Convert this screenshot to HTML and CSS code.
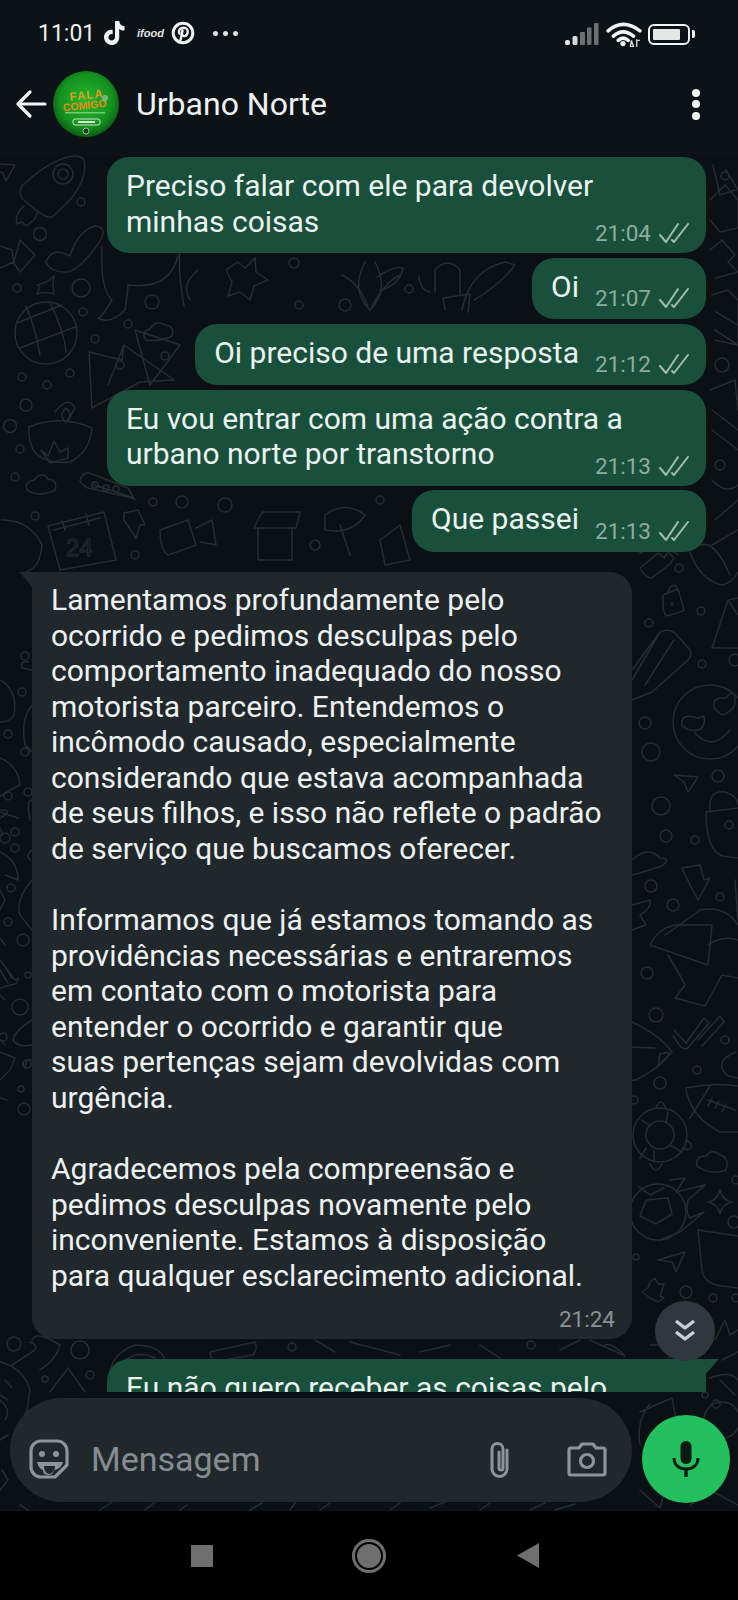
FILE: index.html
```html
<!DOCTYPE html>
<html lang="pt">
<head>
<meta charset="utf-8">
<title>Urbano Norte</title>
<link rel="stylesheet" href="styles.css">
</head>
<body>
<div class="phone">
  <svg class="wallpaper" viewBox="0 0 738 1600" width="738" height="1600" aria-hidden="true">
    <g fill="none" stroke="#272c2f" stroke-width="1.5" stroke-linejoin="round" stroke-linecap="round">
      <!-- upper left -->
      <path d="M0 164 L15 165 L6 181 L3 173 L0 172"/>
      <path d="M22 186 Q42 166 64 158 Q80 153 84 160 Q88 178 70 200 L52 217 Q44 219 22 198 Q18 192 22 186Z"/>
      <circle cx="63" cy="174" r="10"/><circle cx="63" cy="174" r="5"/>
      <path d="M24 206 Q14 214 17 224 L22 222 L26 226 L34 220 L38 212"/>
      <circle cx="81" cy="202" r="4"/><circle cx="40" cy="234" r="6.500"/>
      <path d="M0 246 L12 250 L14 262 L20 240 L35 255 L20 272 L13 262 L0 268"/>
      <path d="M46 262 Q52 246 70 256 Q78 230 96 226 Q112 228 92 252 Q76 272 66 272 Q50 272 46 262Z"/>
      <path d="M102 246 Q100 290 112 300 Q100 320 98 318 Q110 325 125 310 Q128 290 128 285 Q170 290 178 256"/>
      <path d="M37 285 Q47 283 54 276 Q52 285 54 294 Q45 291 37 294 Q41 285 37 285Z"/>
      <circle cx="81" cy="288" r="9"/><circle cx="17" cy="288" r="4"/>
      <circle cx="46" cy="333" r="31"/><path d="M17 323 L62 305 M20 348 L75 327 M26 306 Q36 330 40 355 M50 303 Q64 330 66 352"/>
      <circle cx="83" cy="312" r="4"/><circle cx="128" cy="324" r="4"/><circle cx="95" cy="339" r="4"/><circle cx="152" cy="302" r="7"/>
      <path d="M146 340 Q140 332 150 329 Q156 319 165 325 Q175 326 172 336 Q160 342 146 340Z"/>
      <path d="M89 352 L122 360 L124 345 L174 380 L140 382 L92 408 Z M124 345 L108 385"/>
      <circle cx="22" cy="377" r="4"/><circle cx="47" cy="385" r="4"/><circle cx="70" cy="373" r="4"/><circle cx="165" cy="356" r="4"/>
      <path d="M55 412 Q68 395 75 408 L68 420"/>
      <path d="M182 242 Q176 260 184 306 M198 270 Q180 285 190 300"/>
      <!-- lamp / card / calendar row -->
      <circle cx="10" cy="426" r="6.500"/><circle cx="20" cy="449" r="4"/><circle cx="15" cy="477" r="4"/><circle cx="26" cy="405" r="6"/>
      <path d="M29 427 Q60 414 92 428 Q90 452 70 462 Q45 465 33 450 Q28 438 29 427Z"/>
      <path d="M66 408 Q58 416 66 422 Q74 416 66 408Z M41 450 L48 456 L54 441 L60 452 L68 448 L68 458 L50 463Z"/>
      <path d="M27 490 Q24 482 34 480 Q42 470 48 479 Q58 480 55 490 Q40 498 27 490Z"/>
      <path d="M80 480 Q84 470 92 474 L128 488 L135 500 L132 498 L88 488 Q80 484 80 480Z M94 485 L134 498"/>
      <circle cx="95" cy="485" r="3"/><circle cx="106" cy="488" r="3"/><circle cx="116" cy="489" r="3"/>
      <circle cx="153" cy="502" r="4"/><circle cx="182" cy="502" r="6"/><circle cx="35" cy="516" r="4"/><circle cx="135" cy="555" r="4"/>
      <path d="M48 526 L104 512 L116 560 L60 570 Z M54 530 L100 518"/>
      <path d="M62 520 L65 530 M86 514 L89 525"/>
      <path d="M124 513 L138 510 L145 525 L140 525 L136 538 L124 520 Z"/>
      <path d="M160 530 L188 520 L196 545 L168 555 Q160 550 160 530Z M196 528 L212 520 L216 545 L200 542"/>
      <path d="M2 520 Q30 520 42 545 Q40 568 26 572"/>
      <text x="66" y="556" class="wall-num">24</text>
      <!-- between bubbles -->
      <path d="M226 270 L238 262 L245 268 L255 258 L256 272 L268 280 L254 286 L250 300 L240 292 L228 296 L232 282Z"/>
      <circle cx="294" cy="263" r="5"/><circle cx="299" cy="305" r="4"/><circle cx="345" cy="305" r="6"/>
      <path d="M365 262 Q350 290 370 310 Q390 290 375 262 M342 275 Q358 282 368 306 M400 275 Q385 282 372 306"/>
      <path d="M430 292 Q420 290 419 276 M445 310 L443 298 L470 294 L468 312 M435 292 L435 270 Q448 256 460 270 L460 294"/>
      <path d="M474 300 Q500 285 515 265 L505 262 Q470 270 462 310"/>
      <circle cx="409" cy="289" r="4"/>
      <path d="M377 277 Q395 265 403 268 Q400 285 380 290"/>
      <path d="M135 330 L180 345 L150 385 Z"/><circle cx="120" cy="365" r="4"/>
      <path d="M262 512 L300 512 L296 528 L254 528Z M258 528 L258 560 L292 560 L292 528"/>
      <path d="M325 515 Q345 500 365 515 Q352 535 325 530Z M340 525 L350 555"/>
      <circle cx="315" cy="545" r="5"/><circle cx="380" cy="500" r="4"/><circle cx="225" cy="505" r="7"/>
      <path d="M380 540 L400 525 L410 560 L385 565Z"/>
      <!-- right of outgoing bubbles -->
      <path d="M713 165 L720 195 L735 190 M726 170 L738 190"/>
      <circle cx="725" cy="176" r="4"/>
      <path d="M710 200 L725 185 L738 200 L738 228 L720 232 L710 220"/>
      <path d="M710 250 L722 240 L735 255 L728 262 L738 272 L716 278"/>
      <path d="M712 295 L728 290 L738 300 L738 345 L715 340"/>
      <path d="M716 312 L738 325 M715 330 L738 345"/>
      <circle cx="722" cy="365" r="7"/>
      <path d="M710 390 L735 380 L738 410 M712 410 L738 430 M712 430 L738 450"/>
      <circle cx="720" cy="465" r="5"/>
      <path d="M712 480 Q725 495 738 485 M715 520 L738 500 M712 545 L738 530"/>
      <!-- right strip -->
      <path d="M640 553 Q660 540 678 555 M690 552 Q700 580 722 585 Q732 583 738 572 M700 545 Q715 540 730 575"/>
      <path d="M640 568 L658 553 L664 558 L668 552 L674 558 L670 564 L652 578 Q645 578 640 568Z"/>
      <circle cx="679" cy="568" r="4"/>
      <path d="M663 595 L678 589 L684 610 Q682 612 666 616 L663 610 Z M668 592 Q670 584 676 586 L678 590"/>
      <circle cx="672" cy="604" r="1"/>
      <circle cx="701" cy="611" r="4"/><circle cx="649" cy="623" r="4"/><circle cx="702" cy="664" r="4"/>
      <path d="M632 670 L660 632 Q668 628 675 633 L690 650 Q692 656 688 660 L652 692 L632 700 M632 680 L660 632 M645 685 L674 640"/>
      <path d="M712 648 L728 600 L738 598 M712 648 L738 648 M728 600 L738 615"/>
      <circle cx="735" cy="660" r="6"/>
      <circle cx="710" cy="722" r="37"/>
      <path d="M695 733 Q712 752 730 730"/>
      <path d="M698 718 Q680 712 682 726 Q690 732 698 730 Q706 728 704 716Z"/>
      <path d="M714 708 Q712 696 726 698 Q736 686 735 704 Q732 712 722 715 Z"/>
      <circle cx="645" cy="723" r="6"/><circle cx="651" cy="752" r="9"/>
      <path d="M674 775 L698 777 L688 792 L684 782Z"/>
      <circle cx="718" cy="776" r="6"/><circle cx="661" cy="806" r="9"/><circle cx="666" cy="836" r="6"/><circle cx="695" cy="840" r="4"/>
      <path d="M710 810 Q708 790 725 792 Q738 796 738 805 M706 812 L738 808 M706 812 Q706 850 722 856 L738 858"/>
      <circle cx="729" cy="825" r="4"/>
      <path d="M632 860 Q648 845 660 858 Q672 858 662 866 Q650 870 632 875"/>
      <path d="M682 868 L700 865 L704 880 L710 878 L698 900 L690 885 Z"/>
      <circle cx="651" cy="886" r="6"/><circle cx="673" cy="905" r="6"/><circle cx="720" cy="897" r="4"/>
      <path d="M632 905 L650 900 Q652 908 640 915 L646 925 L632 930"/>
      <path d="M735 880 L738 920"/>
      <path d="M665 935 Q680 925 700 910 Q725 905 738 925"/>
      <!-- hat row -->
      <path d="M650 945 Q660 925 680 925 L712 925 L708 965 Z M708 945 Q722 935 738 940 M668 955 Q680 975 685 985 L675 998 L705 1006 L722 975 L738 978"/>
      <circle cx="647" cy="973" r="6"/><circle cx="656" cy="1015" r="7"/>
      <path d="M674 1030 L686 1043 L704 1018 L709 1023 L688 1048 Q684 1050 680 1046 L673 1036 M698 1040 L720 1016 L724 1022 L702 1046"/>
      <circle cx="725" cy="1040" r="4"/>
      <path d="M736 1052 Q712 1062 728 1076 L738 1078"/>
      <path d="M632 1022 Q660 1035 672 1052 Q660 1068 636 1080 L632 1080 M632 1047 L655 1048 M660 1054 Q672 1050 668 1056 L658 1066Z"/>
      <circle cx="697" cy="1070" r="4"/><circle cx="660" cy="1083" r="6"/><circle cx="634" cy="1100" r="4"/>
      <path d="M686 1088 Q712 1082 738 1086 M686 1090 Q692 1118 720 1132 L738 1132 M710 1086 L690 1118 M708 1100 L735 1110 M712 1098 L708 1106 M719 1101 L715 1108 M726 1104 L722 1112"/>
      <circle cx="660" cy="1135" r="27"/><circle cx="660" cy="1135" r="14"/>
      <path d="M656 1108 Q660 1096 666 1108 M686 1140 Q696 1146 688 1150 L683 1148 M650 1164 Q656 1176 662 1164 M668 1112 L666 1122 M642 1120 L650 1126 M670 1145 L682 1152 M646 1148 L640 1158 M654 1150 L654 1162"/>
      <path d="M697 1166 Q695 1156 706 1156 Q712 1148 720 1155 Q730 1158 726 1170 Q710 1176 697 1166Z"/>
      <path d="M720 1190 Q722 1200 732 1202 Q722 1204 720 1214 Q718 1204 708 1202 Q718 1200 720 1190Z"/>
      <circle cx="658" cy="1212" r="28"/>
      <path d="M646 1200 L668 1198 L672 1214 L656 1224 L640 1216Z M638 1186 L650 1195 L664 1188 M670 1180 L685 1178 L676 1192 L705 1185 L688 1200 Q685 1212 690 1218 L704 1212 L680 1232 L660 1240"/>
      <circle cx="734" cy="1222" r="6"/><circle cx="736" cy="1180" r="4"/>
      <path d="M698 1230 L738 1236 M698 1230 L702 1270 Q704 1284 722 1286 L738 1288"/>
      <path d="M658 1260 L685 1252 L676 1272 L672 1262Z"/>
      <circle cx="686" cy="1292" r="6"/><circle cx="713" cy="1298" r="4"/><circle cx="636" cy="1257" r="3"/><circle cx="736" cy="1298" r="4"/>
      <path d="M650 1282 L655 1278 L658 1284 L664 1284 L662 1290 L660 1296 L664 1298 L658 1302 L650 1298 L642 1292 L648 1288Z"/>
      <path d="M715 1340 L725 1320 L730 1335 L738 1330 M650 1345 L670 1345 Q680 1350 668 1358"/>
      <path d="M722 1360 L738 1352 M710 1378 Q730 1370 738 1380 M720 1380 L735 1395"/>
      <circle cx="716" cy="1404" r="4"/>
      <circle cx="722" cy="1420" r="18"/>
      <path d="M640 1412 L672 1398 L680 1440 M650 1404 Q636 1420 640 1445"/>
      <circle cx="705" cy="1395" r="3"/>
      <path d="M640 1490 L660 1508 L668 1480 L690 1500 M690 1505 L710 1490 L738 1505"/>
      <!-- left strip -->
      <circle cx="25" cy="656" r="4"/><circle cx="22" cy="692" r="4"/><circle cx="8" cy="734" r="4"/>
      <path d="M0 680 Q18 690 14 715 Q10 722 0 722 M32 670 L22 668 Q20 660 28 662 M32 705 Q20 720 25 745 L32 752"/>
      <circle cx="25" cy="752" r="4"/><circle cx="28" cy="792" r="4"/><circle cx="8" cy="796" r="4"/>
      <path d="M0 758 Q18 765 20 785 Q10 790 0 796 M0 812 L18 818 M0 818 Q15 810 0 810"/>
      <path d="M0 828 L3 835 M32 800 Q26 800 30 820"/>
      <circle cx="15" cy="832" r="4"/><circle cx="15" cy="848" r="4"/><circle cx="5" cy="838" r="5"/>
      <path d="M0 852 Q18 860 18 880 L5 875 M32 850 Q25 855 30 860"/>
      <circle cx="11" cy="888" r="4"/><circle cx="8" cy="922" r="4"/><circle cx="23" cy="940" r="6"/>
      <path d="M0 890 L5 900 L0 910 M32 880 Q15 900 20 915 L32 930 M0 938 L5 945"/>
      <path d="M0 960 L15 980 L18 978 Q18 985 10 985 L0 988 M0 970 L8 983 M4 965 L12 978"/>
      <circle cx="20" cy="1007" r="8"/><circle cx="28" cy="975" r="3"/>
      <path d="M0 995 L5 1000 M32 1020 Q15 1030 13 1040 Q18 1048 32 1045 M0 1040 L5 1045"/>
      <circle cx="3" cy="1037" r="4"/><circle cx="27" cy="1064" r="4"/>
      <path d="M0 1052 L15 1058 L10 1070 L0 1080 M32 1060 Q26 1058 25 1068"/>
      <circle cx="21" cy="1089" r="3"/><circle cx="24" cy="1109" r="6"/>
      <path d="M0 1098 L7 1100"/>
      <circle cx="14" cy="1344" r="7"/>
      <path d="M0 1362 Q24 1368 30 1390 L27 1410 L18 1430 M12 1365 L35 1350 Q38 1345 30 1342 M5 1380 L12 1388 M0 1395 L8 1400"/>
      <circle cx="80" cy="1350" r="9"/><circle cx="45" cy="1379" r="3"/><circle cx="90" cy="1375" r="4"/>
      <path d="M50 1392 L68 1368 L85 1392 M32 1340 Q36 1330 60 1345 Q56 1360 40 1370"/>
      <path d="M110 1380 Q108 1355 135 1345 Q160 1345 165 1360 M125 1360 Q140 1350 155 1358"/>
      <path d="M210 1352 L255 1342 Q258 1350 253 1355 L212 1362Z"/><circle cx="292" cy="1347" r="4"/>
      <path d="M315 1340 L335 1352 M350 1342 L400 1355 M420 1352 L450 1345 M480 1345 L500 1358"/>
      <circle cx="531" cy="1345" r="4"/>
      <path d="M590 1340 L625 1356 Q612 1342 605 1345 M560 1350 L580 1340"/>
      <path d="M20 1505 L28 1510 M100 1510 L112 1502 M145 1510 L155 1502 M180 1510 L187 1505 M250 1510 L262 1503 M290 1510 L295 1503 M320 1510 L330 1503 M390 1510 L400 1503 M430 1508 L445 1502 M480 1510 L490 1503 M530 1510 L545 1503 M555 1510 L575 1504"/>
      <path d="M0 1400 Q12 1410 5 1420 M0 1490 L8 1480 L2 1470 M0 1440 L8 1435"/>
    </g>
  </svg>

  <header class="topbar">
    <div class="status">
      <div class="status-left">
        <span class="clock">11:01</span>
        <svg class="ic-tiktok" viewBox="0 0 24 26"><path d="M13 1h4.200c.3 3 2.300 5 5.300 5.300v4.300c-2 0-3.800-.6-5.300-1.700v8.300c0 4.700-3.500 7.800-7.600 7.800C5.500 24.900 2 21.600 2 17.300c0-4.700 4-8 8.700-7.500v4.400c-2.300-.5-4.300 1-4.300 3.100 0 1.900 1.500 3.200 3.200 3.200 1.900 0 3.300-1.300 3.400-3.400z" fill="#f1f3f3"/></svg>
        <span class="ifood">ifood</span>
        <svg class="ic-pin" viewBox="0 0 24 24"><circle cx="12" cy="12" r="9.800" fill="none" stroke="#f1f3f3" stroke-width="3"/><path d="M9.500 19l2-9.500M8.300 12.500C7 8.500 10 6.800 12.500 6.800c2.800 0 4.500 1.800 4.200 4.400-.3 2.600-2 3.900-3.500 3.900-1.200 0-2-.7-2-1.600" fill="none" stroke="#f1f3f3" stroke-width="2.400" stroke-linecap="round"/></svg>
        <span class="more-dots"><i></i><i></i><i></i></span>
      </div>
      <div class="status-right">
        <svg class="ic-signal" viewBox="0 0 34 22"><rect x="0" y="17" width="5" height="5" rx="2" fill="#e8e8e8"/><rect x="7.500" y="13" width="5" height="9" rx="1.500" fill="#d8d8d8"/><rect x="15" y="9" width="5" height="13" rx="1" fill="#6b6f70"/><rect x="22" y="4.500" width="4.500" height="17.500" rx="1" fill="#6b6f70"/><rect x="29" y="0" width="4.500" height="22" rx="1" fill="#6b6f70"/></svg>
        <svg class="ic-wifi" viewBox="0 0 34 24"><g fill="none" stroke="#f1f3f3" stroke-width="3.400" stroke-linecap="round"><path d="M2 9Q16-3 32 9"/><path d="M7 14Q16 6 26 14"/><path d="M11.500 18Q16 14 21 18"/></g><circle cx="16" cy="21" r="2.500" fill="#f1f3f3"/><path d="M24 18l2 6h-3zM29 17v7M29 18h3" stroke="#d8d8d8" stroke-width="1.300" fill="none"/></svg>
        <span class="battery"><span class="battery-fill"></span></span>
      </div>
    </div>
    <div class="titlebar">
      <svg class="ic-back" viewBox="0 0 32 30"><path d="M30 15H3M15 3L3 15l12 12" fill="none" stroke="#f4f6f6" stroke-width="3.200" stroke-linejoin="round" stroke-linecap="round"/></svg>
      <svg class="avatar" viewBox="0 0 66 66">
        <defs><radialGradient id="ag" cx="50%" cy="45%" r="55%"><stop offset="0" stop-color="#24b82e"/><stop offset="0.72" stop-color="#149220"/><stop offset="1" stop-color="#0a5c14"/></radialGradient></defs>
        <circle cx="33" cy="33" r="33" fill="url(#ag)"/>
        <text x="34" y="28" class="av-a" transform="rotate(-6 34 28)">FALA</text>
        <text x="32" y="38" class="av-b" transform="rotate(-6 32 38)">COMIGO</text>
        <rect x="12" y="41" width="40" height="1.500" fill="#9fdc8a" opacity="0.7"/>
        <rect x="20" y="48" width="27" height="6" rx="2" fill="none" stroke="#c6e8c0" stroke-width="1"/>
        <rect x="25" y="50" width="17" height="2" fill="#d6efd0"/>
        <circle cx="33" cy="60" r="3" fill="#10401a" stroke="#b8d8b0" stroke-width="0.800"/>
        <circle cx="52" cy="27" r="3" fill="#7fb08a"/>
      </svg>
      <span class="contact">Urbano Norte</span>
      <span class="kebab"><i></i><i></i><i></i></span>
    </div>
  </header>

  <main class="chat">
    <div class="bubble out col">
      <p>Preciso falar com ele para devolver<br>minhas coisas</p>
      <div class="meta"><span>21:04</span><svg class="ticks" viewBox="0 0 30 22"><path d="M1 13l6 7L19 2M13 18l2 2L29 2" fill="none" stroke="#a5bcb0" stroke-width="2" stroke-linecap="round" stroke-linejoin="round"/></svg></div>
    </div>
    <div class="bubble out row">
      <p>Oi</p>
      <div class="meta"><span>21:07</span><svg class="ticks" viewBox="0 0 30 22"><path d="M1 13l6 7L19 2M13 18l2 2L29 2" fill="none" stroke="#a5bcb0" stroke-width="2" stroke-linecap="round" stroke-linejoin="round"/></svg></div>
    </div>
    <div class="bubble out row">
      <p>Oi preciso de uma resposta</p>
      <div class="meta"><span>21:12</span><svg class="ticks" viewBox="0 0 30 22"><path d="M1 13l6 7L19 2M13 18l2 2L29 2" fill="none" stroke="#a5bcb0" stroke-width="2" stroke-linecap="round" stroke-linejoin="round"/></svg></div>
    </div>
    <div class="bubble out col">
      <p>Eu vou entrar com uma ação contra a<br>urbano norte por transtorno</p>
      <div class="meta"><span>21:13</span><svg class="ticks" viewBox="0 0 30 22"><path d="M1 13l6 7L19 2M13 18l2 2L29 2" fill="none" stroke="#a5bcb0" stroke-width="2" stroke-linecap="round" stroke-linejoin="round"/></svg></div>
    </div>
    <div class="bubble out row">
      <p>Que passei</p>
      <div class="meta"><span>21:13</span><svg class="ticks" viewBox="0 0 30 22"><path d="M1 13l6 7L19 2M13 18l2 2L29 2" fill="none" stroke="#a5bcb0" stroke-width="2" stroke-linecap="round" stroke-linejoin="round"/></svg></div>
    </div>
    <div class="bubble in">
      <p>Lamentamos profundamente pelo<br>ocorrido e pedimos desculpas pelo<br>comportamento inadequado do nosso<br>motorista parceiro. Entendemos o<br>incômodo causado, especialmente<br>considerando que estava acompanhada<br>de seus filhos, e isso não reflete o padrão<br>de serviço que buscamos oferecer.<br><br>Informamos que já estamos tomando as<br>providências necessárias e entraremos<br>em contato com o motorista para<br>entender o ocorrido e garantir que<br>suas pertenças sejam devolvidas com<br>urgência.<br><br>Agradecemos pela compreensão e<br>pedimos desculpas novamente pelo<br>inconveniente. Estamos à disposição<br>para qualquer esclarecimento adicional.</p>
      <div class="meta"><span>21:24</span></div>
    </div>
    <div class="bubble out tailed">
      <p>Eu não quero receber as coisas pelo</p>
    </div>
  </main>

  <button class="scroll-down" aria-label="Rolar para baixo">
    <svg viewBox="0 0 24 26" width="24" height="26"><path d="M3 3l9 7 9-7M3 14l9 7 9-7" fill="none" stroke="#c8d0d3" stroke-width="3.400" stroke-linejoin="round"/></svg>
  </button>

  <div class="composer">
    <div class="input">
      <svg class="ic-sticker" viewBox="0 0 40 40"><path d="M12 2h16a10 10 0 0 1 10 10v14L26 38H12A10 10 0 0 1 2 28V12A10 10 0 0 1 12 2Z" fill="none" stroke="#8d9599" stroke-width="3.200" stroke-linejoin="round"/><circle cx="13" cy="15" r="3" fill="#8d9599"/><circle cx="27" cy="15" r="3" fill="#8d9599"/><path d="M8 23h26c-1 5-6 8-9 8-1 4-3 5-6 5-4 0-5-3-5-5-3-1-5-4-6-8z" fill="#8d9599"/><path d="M15 27h11c0 4-3 8-6 8s-5-4-5-8z" fill="#20282c"/></svg>
      <span class="placeholder">Mensagem</span>
      <svg class="ic-clip" viewBox="0 0 26 40"><path d="M20 10v19a7.500 7.500 0 0 1-15 0V9a5.500 5.500 0 0 1 11 0v19a2 2 0 0 1-4 0V12" fill="none" stroke="#8d9599" stroke-width="3" stroke-linecap="round" transform="translate(1 1)"/></svg>
      <svg class="ic-camera" viewBox="0 0 40 36"><path d="M4 7h8l3-4h11l3 4h7a2 2 0 0 1 2 2v23a2 2 0 0 1-2 2H4a2 2 0 0 1-2-2V9a2 2 0 0 1 2-2Z" fill="none" stroke="#8d9599" stroke-width="3.200" stroke-linejoin="round"/><circle cx="20" cy="20" r="6.500" fill="none" stroke="#8d9599" stroke-width="3.200"/></svg>
    </div>
    <button class="mic" aria-label="Gravar">
      <svg viewBox="0 0 28 38" width="28" height="38"><rect x="8.500" y="1" width="11" height="23" rx="5.500" fill="#0d1a14"/><path d="M2 18c0 7 5 11 12 11s12-4 12-11" fill="none" stroke="#0d1a14" stroke-width="3"/><path d="M14 29v8" stroke="#0d1a14" stroke-width="3.400"/></svg>
    </button>
  </div>

  <nav class="navbar">
    <span class="nav-square"></span>
    <span class="nav-circle"></span>
    <span class="nav-tri"></span>
  </nav>
</div>
</body>
</html>
```

FILE: styles.css
```css
* { box-sizing: border-box; }
html, body { margin: 0; padding: 0; background: #000; }
body { font-family: Roboto, "Liberation Sans", sans-serif; }

.phone {
  position: relative;
  width: 738px;
  height: 1600px;
  overflow: hidden;
  display: flex;
  flex-direction: column;
  background: #0b1014;
}
.wallpaper { position: absolute; top: 0; left: 0; }
.wall-num { font: 400 24px "Liberation Sans", sans-serif; fill: none; stroke: #272c2f; stroke-width: 1; }

.topbar {
  position: relative;
  flex: none;
  height: 155px;
  background: #0c1216;
  color: #f2f4f4;
}
.status {
  height: 66px;
  padding: 18px 48px 0 38px;
  display: flex;
  justify-content: space-between;
  align-items: flex-start;
}
.status-left { display: flex; align-items: center; height: 30px; }
.status-right { display: flex; align-items: center; height: 30px; padding-top: 2px; }
.clock { font-size: 23px; width: 64px; color: #eceeee; }
.ic-tiktok { width: 24px; height: 26px; }
.ifood { font: italic 700 11px "Liberation Sans", sans-serif; margin-left: 11px; width: 24px; color: #e4e6e6; }
.ic-pin { width: 24px; height: 24px; margin-left: 10px; }
.more-dots { display: flex; gap: 5px; margin-left: 18px; }
.more-dots i { width: 5px; height: 5px; border-radius: 50%; background: #e0e2e2; }
.ic-signal { width: 34px; height: 22px; }
.ic-wifi { width: 36px; height: 26px; margin-left: 7px; }
.battery {
  position: relative;
  width: 42px;
  height: 21px;
  margin-left: 6px;
  padding: 3px;
  border: 2.500px solid #f1f3f3;
  border-radius: 6px;
}
.battery::after {
  content: "";
  position: absolute;
  right: -7px;
  top: 4px;
  width: 3px;
  height: 8px;
  background: #f1f3f3;
  border-radius: 0 2px 2px 0;
}
.battery-fill { display: block; width: 27px; height: 100%; background: #e4e6e6; border-radius: 1px; }

.titlebar {
  height: 76px;
  display: flex;
  align-items: center;
  padding-left: 15px;
}
.ic-back { width: 32px; height: 30px; flex: none; }
.avatar { width: 66px; height: 66px; flex: none; margin-left: 6px; }
.av-a { font: 700 11.500px "Liberation Sans", sans-serif; fill: #d9a01e; text-anchor: middle; letter-spacing: 1px; }
.av-b { font: 700 10.500px "Liberation Sans", sans-serif; fill: #ea8a16; text-anchor: middle; }
.contact { font-size: 32px; margin-left: 17px; color: #eef1f1; }
.kebab { margin-left: auto; margin-right: 38px; display: flex; flex-direction: column; gap: 3.500px; }
.kebab i { width: 8px; height: 8px; border-radius: 50%; background: #f2f4f4; }

.chat {
  position: relative;
  flex: none;
  height: 1237px;
  overflow: hidden;
  padding: 2px 32px 0 32px;
  display: flex;
  flex-direction: column;
  align-items: flex-end;
}
.bubble { position: relative; color: #ecf2ef; font-size: 30px; line-height: 35.560px; flex: none; }
.bubble p { margin: 0; white-space: nowrap; }
.out { background: #18503c; margin-top: 4.500px; border-radius: 22px; }
.out:first-child { margin-top: 0; }
.row { display: flex; align-items: flex-end; gap: 16px; height: 61.500px; padding: 11px 17px 0 19px; }
.row p { align-self: flex-start; }
.col { width: 599px; height: 96px; padding: 11px 17px 0 19px; display: flex; flex-direction: column; }
.col .meta { align-self: flex-end; margin-top: -20px; }
.meta {
  display: flex;
  align-items: center;
  gap: 8px;
  height: 34px;
  padding-bottom: 6px;
  font-size: 22.500px;
  line-height: 28px;
  color: #8fab9d;
}
.row .meta { height: 35px; padding-bottom: 7px; }
.ticks { width: 30px; height: 22px; }

.in {
  align-self: flex-start;
  width: 600px;
  height: 767px;
  margin-top: 20.500px;
  padding: 10px 17px 0 19px;
  background: #21282c;
  border-radius: 0 22px 22px 22px;
  color: #eef1f1;
  display: flex;
  flex-direction: column;
}
.in .meta { align-self: flex-end; color: #8b9194; margin-top: 12px; }
.in::before {
  content: "";
  position: absolute;
  left: -13px;
  top: 0;
  width: 14px;
  height: 16px;
  background: #21282c;
  clip-path: polygon(0 0, 100% 0, 100% 100%);
}
.tailed { width: 599px; height: 96px; margin-top: 20px; padding: 11px 17px 0 19px; border-top-right-radius: 0; }
.tailed::before {
  content: "";
  position: absolute;
  right: -13px;
  top: 0;
  width: 14px;
  height: 16px;
  background: #18503c;
  clip-path: polygon(0 0, 100% 0, 0 100%);
}
.scroll-down {
  position: absolute;
  left: 655px;
  top: 1301px;
  width: 60px;
  height: 60px;
  border: 0;
  padding: 0;
  border-radius: 50%;
  background: #2e383e;
  display: flex;
  align-items: center;
  justify-content: center;
}

.composer {
  position: relative;
  flex: none;
  height: 119px;
  padding: 6px 8px 0 10px;
  display: flex;
  align-items: flex-start;
}
.input {
  width: 622px;
  height: 104px;
  background: #20282c;
  border-radius: 52px;
  display: flex;
  align-items: center;
  padding: 18px 25px 0 19px;
}
.ic-sticker { width: 40px; height: 40px; flex: none; }
.placeholder { font-size: 34px; color: #858d91; margin-left: 22px; }
.ic-clip { width: 26px; height: 40px; margin-left: auto; flex: none; }
.ic-camera { width: 40px; height: 36px; margin-left: 55px; flex: none; }
.mic {
  width: 88px;
  height: 88px;
  margin: 17px 0 0 10px;
  border: 0;
  padding: 0;
  border-radius: 50%;
  background: #22c15e;
  display: flex;
  align-items: center;
  justify-content: center;
}

.navbar {
  position: relative;
  flex: none;
  height: 89px;
  background: #000;
  display: flex;
  align-items: center;
  padding: 0 0 0 191px;
}
.nav-square { width: 22px; height: 22px; background: #6f6f6f; }
.nav-circle {
  width: 34px;
  height: 34px;
  margin-left: 139px;
  border-radius: 50%;
  background: #6f6f6f;
  box-shadow: inset 0 0 0 3px #6f6f6f, inset 0 0 0 5px #000;
}
.nav-tri {
  width: 22px;
  height: 25px;
  margin-left: 131px;
  background: #6f6f6f;
  clip-path: polygon(100% 0, 100% 100%, 0 50%);
}
```
